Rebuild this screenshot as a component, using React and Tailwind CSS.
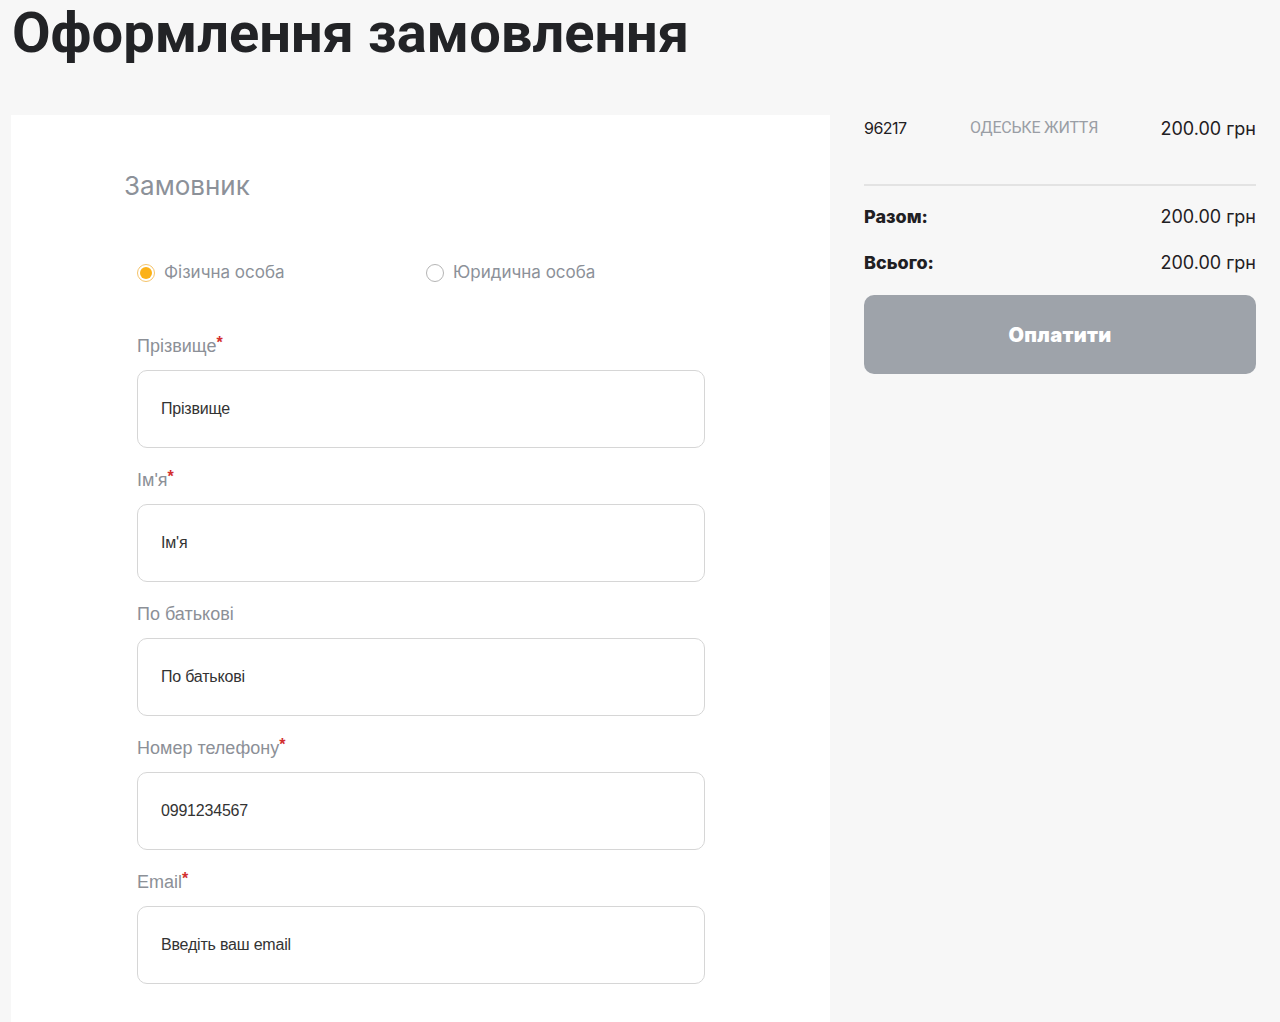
import React from "react";

const fields = [
  { label: "Прізвище", req: true, value: "Прізвище" },
  { label: "Ім'я", req: true, value: "Ім'я" },
  { label: "По батькові", req: false, value: "По батькові" },
  { label: "Номер телефону", req: true, value: "0991234567" },
  { label: "Email", req: true, value: "Введіть ваш email" },
];

function Field({ label, req, value }) {
  return (
    <div className="flex flex-col">
      <div className="h-[22px] flex items-center text-[18px] text-[#8c9097] [font-family:'Liberation_Sans',Arial,sans-serif]">
        {label}
        {req && <span className="text-[#d32f2f] text-[16px] self-start leading-[16px] font-bold">*</span>}
      </div>
      <div className="mt-[13px] h-[78px] w-[568px] rounded-[10px] border border-[#d6d6d6] bg-white flex items-center pl-[23px] text-[16px] text-[#333] tracking-[-0.2px] [font-family:'Liberation_Sans',Arial,sans-serif]">
        {value}
      </div>
    </div>
  );
}

export default function App() {
  return (
    <div className="min-h-[1022px] bg-[#f7f7f7] overflow-hidden">
      <h1 className="pl-[12px] pt-[2px] text-[56px] leading-[62px] font-bold text-[#222326] [font-family:Roboto,'Liberation_Sans',sans-serif]">
        Оформлення замовлення
      </h1>
      <div className="flex pl-[11px] mt-[51px] gap-[34px]">
        <div className="w-[819px] bg-white min-h-[920px] pl-[113px] pt-[54px]">
          <div className="text-[26px] leading-[34px] text-[#8c9199] [font-family:Inter,'Open_Sans',sans-serif]">
            Замовник
          </div>
          <div className="flex items-center mt-[58px] pl-[13px] h-[24px] text-[17px] text-[#8c9199] [font-family:Inter,'Open_Sans',sans-serif]">
            <div className="flex items-center w-[289px]">
              <span className="w-[18px] h-[18px] rounded-full border border-[#f5c46a] bg-white flex items-center justify-center">
                <span className="w-[12px] h-[12px] rounded-full bg-[#fbb117]"></span>
              </span>
              <span className="ml-[9px]">Фізична особа</span>
            </div>
            <div className="flex items-center">
              <span className="w-[18px] h-[18px] rounded-full border border-[#b5b5b5] bg-white"></span>
              <span className="ml-[9px]">Юридична особа</span>
            </div>
          </div>
          <div className="flex flex-col gap-[21px] mt-[50px] pl-[13px]">
            {fields.map((f) => (
              <Field key={f.label} {...f} />
            ))}
          </div>
        </div>
        <div className="w-[392px] pt-[2px] text-[#1f2023] [font-family:Inter,'Open_Sans',sans-serif]">
          <div className="flex items-center h-[22px]">
            <span className="w-[106px] text-[16px] tracking-[-0.5px]">96217</span>
            <span className="text-[16px] text-[#9a9ea5] tracking-[-0.2px] [font-family:Roboto,sans-serif]">ОДЕСЬКЕ ЖИТТЯ</span>
            <span className="ml-auto text-[18px]">200.00 грн</span>
          </div>
          <div className="mt-[45px] h-[2px] bg-[#e3e3e3]"></div>
          <div className="flex items-center justify-between h-[22px] mt-[19px]">
            <span className="text-[18px] font-extrabold">Разом:</span>
            <span className="text-[18px]">200.00 грн</span>
          </div>
          <div className="flex items-center justify-between h-[22px] mt-[24px]">
            <span className="text-[18px] font-extrabold">Всього:</span>
            <span className="text-[18px]">200.00 грн</span>
          </div>
          <button className="mt-[22px] w-full h-[79px] rounded-[10px] bg-[#9ea3aa] text-white text-[20px] font-black tracking-[0.3px]">
            Оплатити
          </button>
        </div>
      </div>
    </div>
  );
}
